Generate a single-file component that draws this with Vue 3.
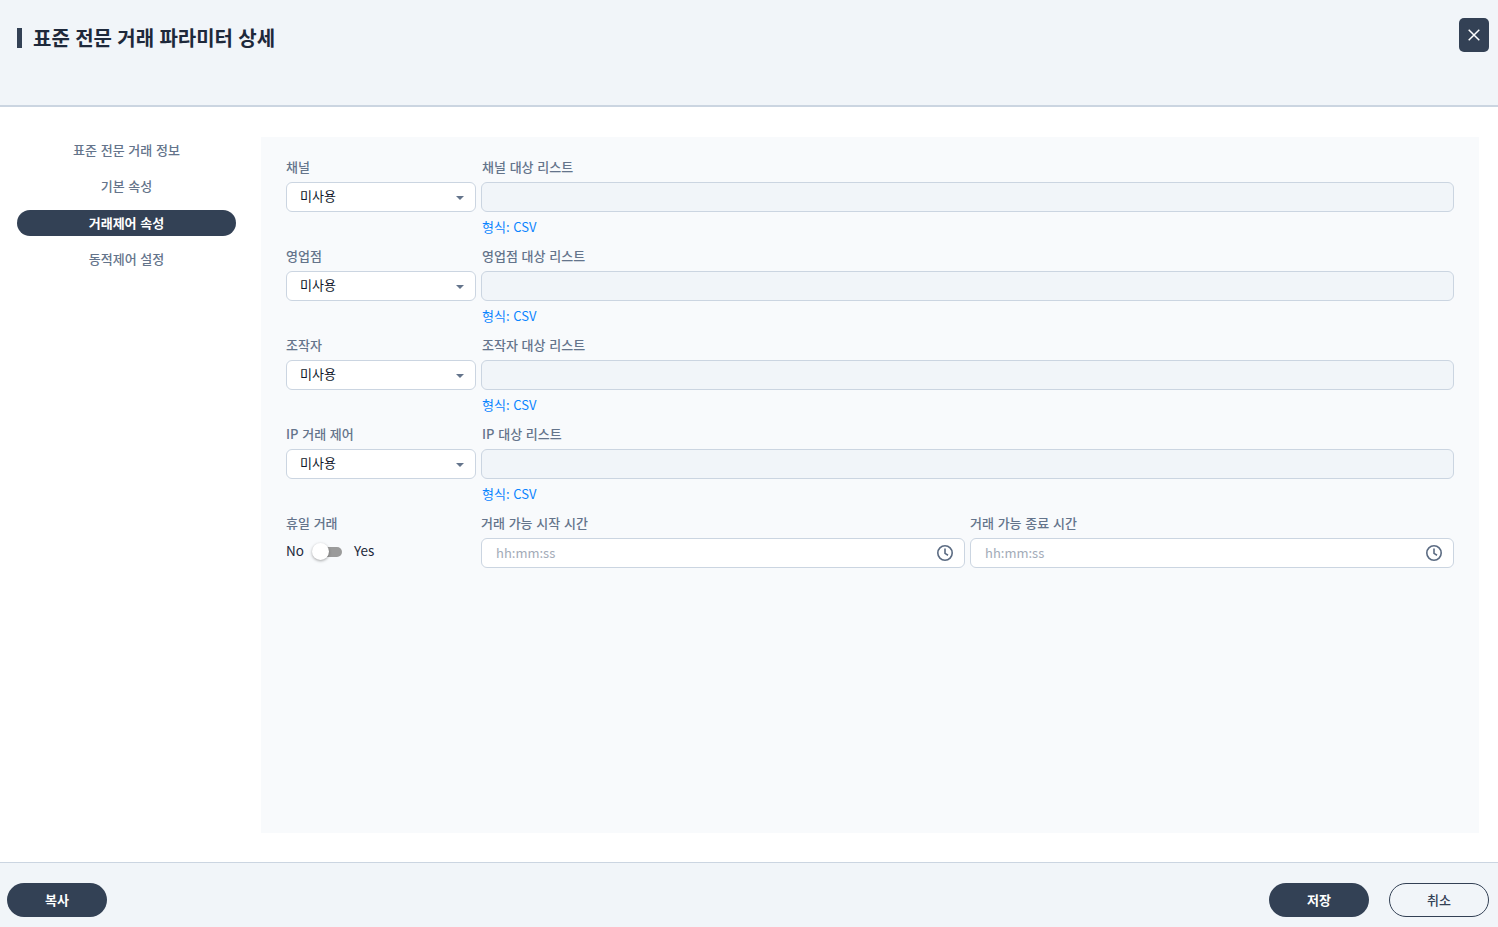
<template>
  <div class="detail">
    <header class="detail__header">
      <h1 class="detail__title">표준 전문 거래 파라미터 상세</h1>
      <button type="button" class="detail__close" aria-label="닫기">
        <svg width="14" height="14" viewBox="0 0 14 14" fill="none" stroke="#fff" stroke-width="1.5">
          <path d="M1.7 1.7l10.6 10.6M12.3 1.7L1.7 12.3" />
        </svg>
      </button>
    </header>

    <main class="detail__body">
      <nav class="side-nav">
        <a
          v-for="item in navItems"
          :key="item"
          class="side-nav__item"
          :class="{ 'side-nav__item--active': item === activeNav }"
        >{{ item }}</a>
      </nav>

      <section class="panel">
        <div v-for="row in targetRows" :key="row.label" class="form-row">
          <div class="field field--short">
            <label class="field__label">{{ row.label }}</label>
            <div class="select">
              <span>미사용</span>
              <i class="select__caret"></i>
            </div>
          </div>
          <div class="field field--grow">
            <label class="field__label field__label--inset">{{ row.listLabel }}</label>
            <div class="input input--disabled"></div>
            <p class="field__hint">형식: CSV</p>
          </div>
        </div>

        <div class="form-row">
          <div class="field field--short">
            <label class="field__label">휴일 거래</label>
            <div class="switch">
              <span>No</span>
              <span class="switch__track"><i class="switch__thumb"></i></span>
              <span>Yes</span>
            </div>
          </div>
          <div v-for="label in timeLabels" :key="label" class="field field--grow">
            <label class="field__label">{{ label }}</label>
            <div class="input">
              <span class="input__placeholder">hh:mm:ss</span>
              <svg class="input__icon" width="18" height="18" viewBox="0 0 18 18" fill="none" stroke="#5b6b82" stroke-width="1.6">
                <circle cx="9" cy="9" r="7.2" />
                <path d="M9 4.6V9.4l3 1.9" />
              </svg>
            </div>
          </div>
        </div>
      </section>
    </main>

    <footer class="detail__footer">
      <button type="button" class="btn btn--solid">복사</button>
      <div class="detail__actions">
        <button type="button" class="btn btn--solid">저장</button>
        <button type="button" class="btn btn--outline">취소</button>
      </div>
    </footer>
  </div>
</template>

<script setup>
const navItems = ['표준 전문 거래 정보', '기본 속성', '거래제어 속성', '동적제어 설정']
const activeNav = '거래제어 속성'

const targetRows = [
  { label: '채널', listLabel: '채널 대상 리스트' },
  { label: '영업점', listLabel: '영업점 대상 리스트' },
  { label: '조작자', listLabel: '조작자 대상 리스트' },
  { label: 'IP 거래 제어', listLabel: 'IP 대상 리스트' },
]

const timeLabels = ['거래 가능 시작 시간', '거래 가능 종료 시간']
</script>

<style>
html,
body {
  margin: 0;
  background: #fff;
}
</style>

<style scoped>
.detail {
  display: flex;
  flex-direction: column;
  height: 927px;
  font-family: "Noto Sans CJK KR", "Noto Sans", sans-serif;
  word-spacing: 0.05em;
  color: #1e293b;
  overflow: hidden;
}

.detail__header {
  display: flex;
  justify-content: space-between;
  align-items: flex-start;
  box-sizing: border-box;
  height: 107px;
  padding: 18px 9px 0 17px;
  background: #f1f5f9;
  border-bottom: 2px solid #cbd5e1;
}

.detail__title {
  margin: 10px 0 0;
  padding-left: 11px;
  border-left: 5px solid #334155;
  font-size: 20px;
  line-height: 20px;
  font-weight: 700;
  color: #1e293b;
}

.detail__close {
  display: flex;
  align-items: center;
  justify-content: center;
  width: 30px;
  height: 34px;
  padding: 0;
  border: 0;
  border-radius: 5px;
  background: #334155;
}

.detail__body {
  flex: 1;
  display: flex;
  gap: 25px;
  padding: 30px 19px 29px 17px;
  min-height: 0;
}

.side-nav {
  display: flex;
  flex-direction: column;
  gap: 10px;
  width: 219px;
}

.side-nav__item {
  height: 26.4px;
  line-height: 26px;
  text-align: center;
  font-size: 13px;
  font-weight: 500;
  color: #64748b;
  border-radius: 13px;
}

.side-nav__item--active {
  background: #334155;
  color: #fff;
  font-weight: 700;
}

.panel {
  flex: 1;
  display: flex;
  flex-direction: column;
  gap: 5px;
  padding: 20px 25px;
  background: #f8fafc;
}

.form-row {
  display: flex;
  gap: 5px;
  height: 84px;
}

.field {
  display: flex;
  flex-direction: column;
}

.field--short {
  width: 190px;
  flex-shrink: 0;
}

.field--grow {
  flex: 1;
  min-width: 0;
}

.field__label {
  height: 25px;
  line-height: 19px;
  font-size: 13px;
  font-weight: 500;
  color: #64748b;
}

.field__label--inset {
  padding-left: 1px;
}

.field__hint {
  margin: 6px 0 0 1px;
  line-height: 18px;
  font-size: 13px;
  color: #0a84ff;
}

.select,
.input {
  display: flex;
  align-items: center;
  justify-content: space-between;
  box-sizing: border-box;
  height: 30px;
  padding: 0 10.5px 0 14px;
  border: 1px solid #cbd5e1;
  border-radius: 6px;
  background: #fff;
  font-size: 13px;
}

.select {
  padding: 0 11px 3px 13px;
  color: #0f172a;
}

.select__caret {
  width: 0;
  height: 0;
  margin: 4px 0 0;
  border-left: 4px solid transparent;
  border-right: 4px solid transparent;
  border-top: 4px solid #64748b;
}

.input--disabled {
  background: #f1f5f9;
}

.input__placeholder {
  padding-bottom: 2px;
  font-size: 13px;
  color: #a3abb8;
}

.switch {
  display: flex;
  align-items: center;
  height: 30px;
  font-size: 13.5px;
  color: #1e293b;
  padding-bottom: 6px;
  box-sizing: border-box;
}

.switch__track {
  position: relative;
  width: 21px;
  height: 10px;
  margin: 4px 12px 0 17px;
  border-radius: 5px;
  background: #9b9b9b;
}

.switch__thumb {
  position: absolute;
  left: -9px;
  top: -4px;
  width: 17px;
  height: 17px;
  border-radius: 50%;
  background: #fff;
  box-shadow: 0 1px 3px rgba(0, 0, 0, 0.35);
}

.detail__footer {
  display: flex;
  justify-content: space-between;
  align-items: center;
  box-sizing: border-box;
  height: 65px;
  padding: 10px 9px 0 7px;
  background: #f1f5f9;
  border-top: 1px solid #cbd5e1;
}

.detail__actions {
  display: flex;
  gap: 20px;
}

.btn {
  width: 100px;
  height: 34px;
  padding: 0 0 2px;
  border-radius: 17px;
  font-family: inherit;
  font-size: 13px;
  font-weight: 700;
}

.btn--solid {
  border: 0;
  background: #334155;
  color: #fff;
}

.btn--outline {
  border: 1px solid #334155;
  background: transparent;
  color: #334155;
  font-weight: 500;
}
</style>
